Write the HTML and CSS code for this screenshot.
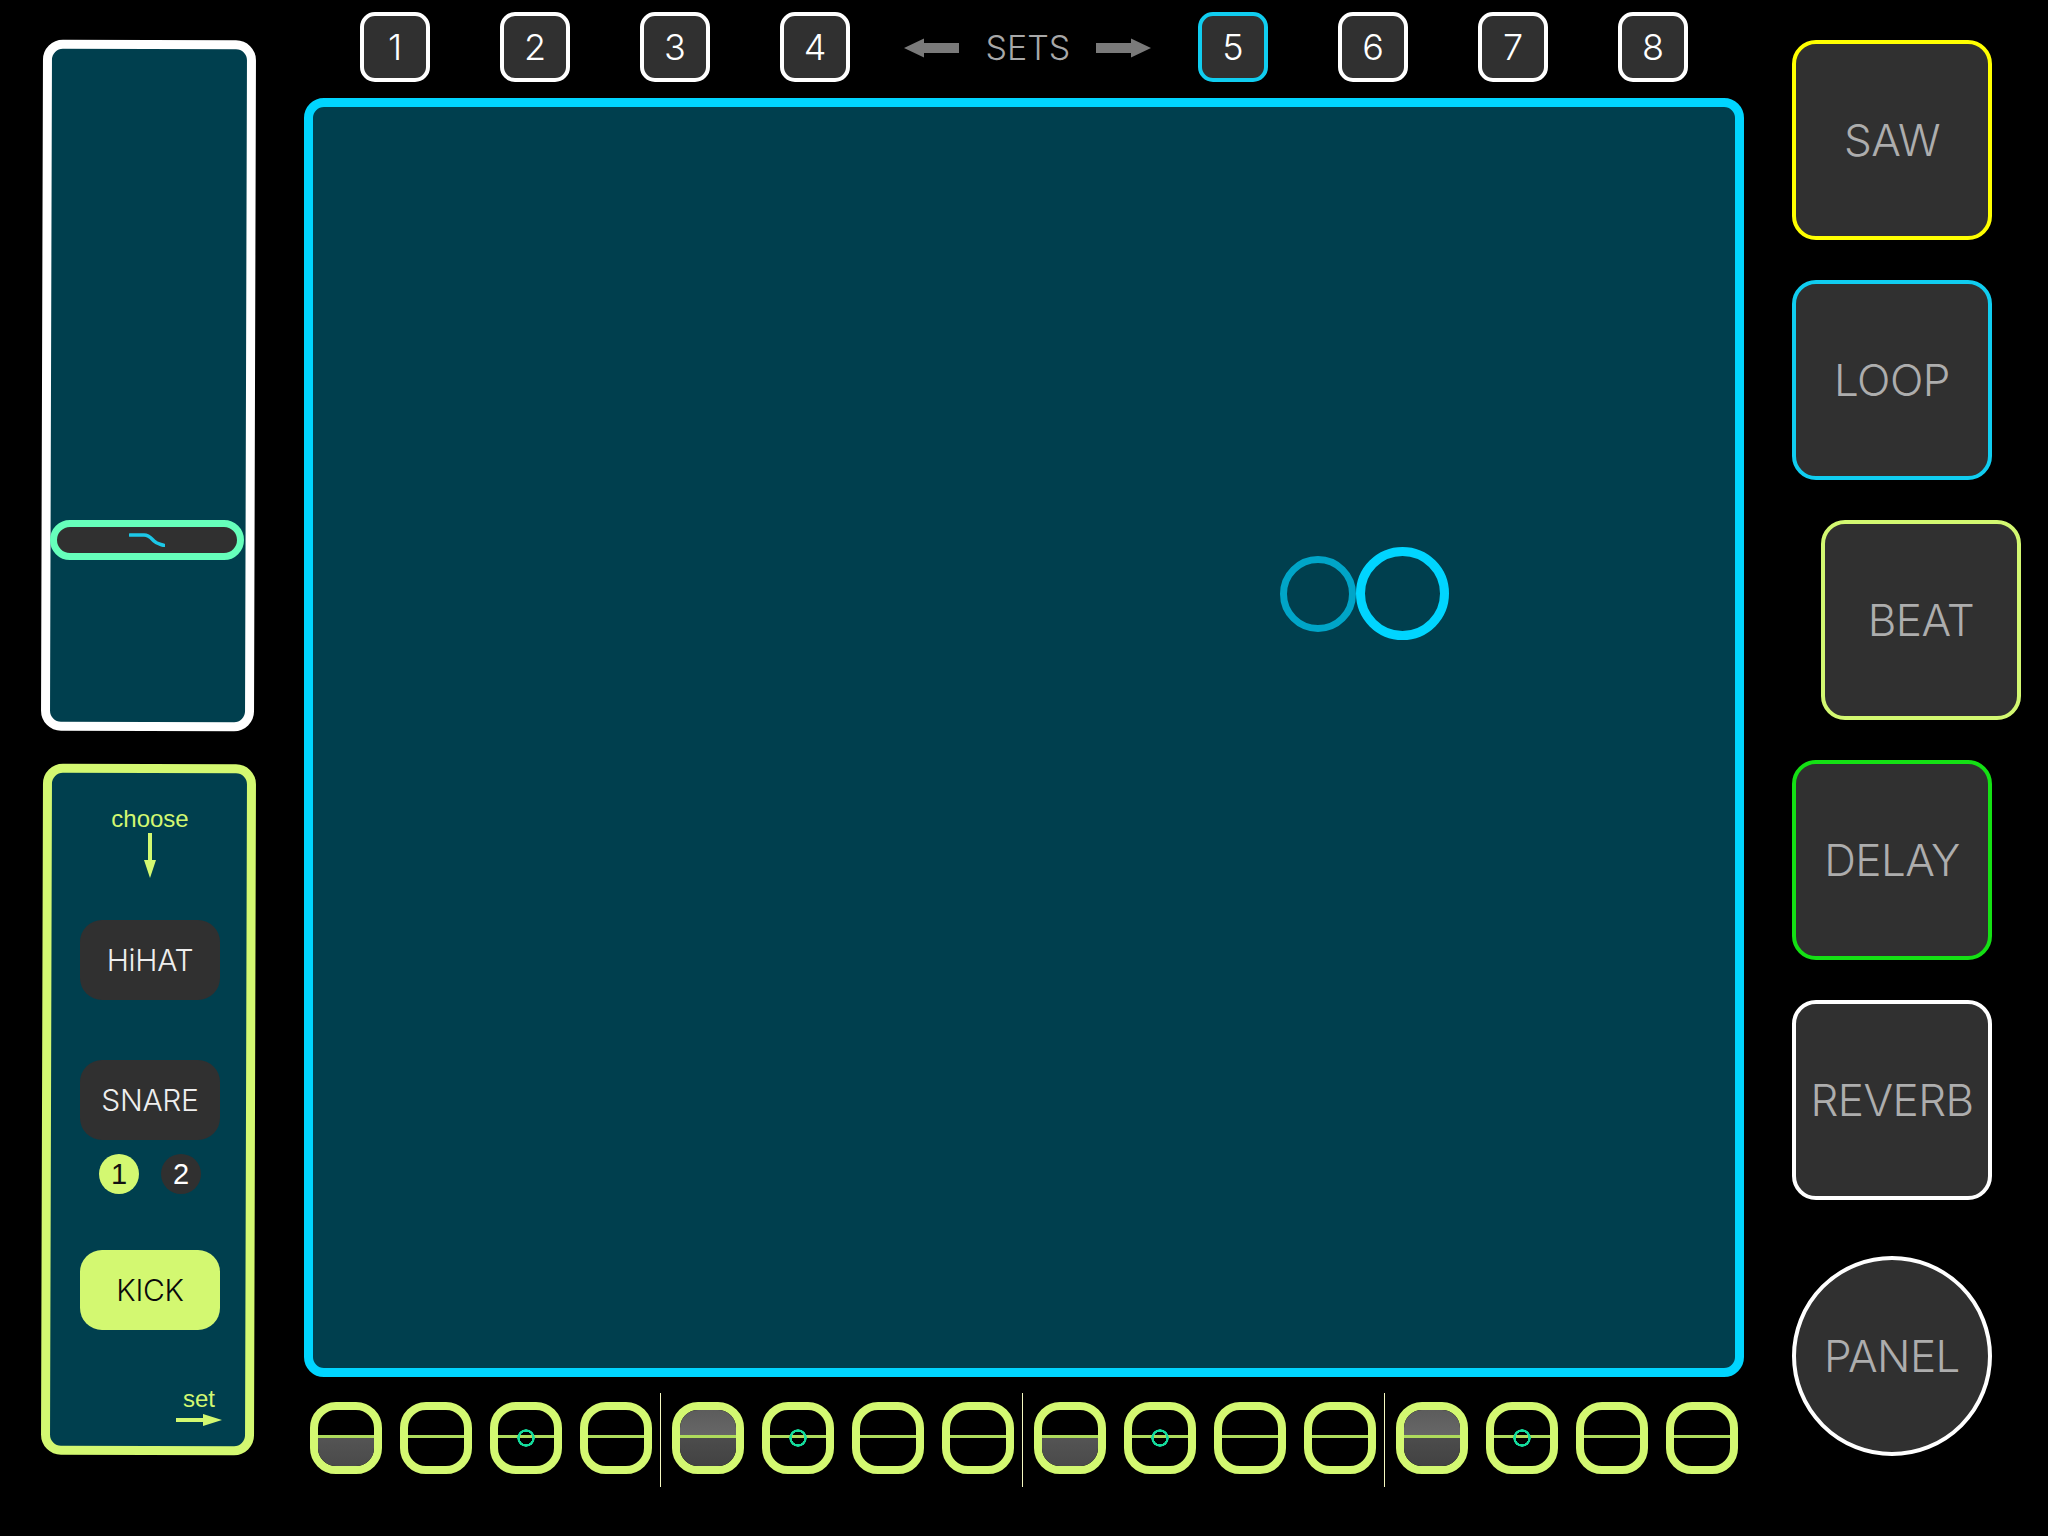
FILE: index.html
```html
<!DOCTYPE html>
<html lang="en">
<head>
<meta charset="utf-8">
<title>Sets</title>
<link rel="stylesheet" href="styles.css">
</head>
<body>
<div class="app">
  <aside class="left">
    <div class="panel panel-fader">
      <div class="handle">
        <svg class="handle-icon" width="36" height="14" viewBox="0 0 36 14"><path d="M1 2 H15 C20 2 22 5 25 8 C28 11 31 11 35 12.5" fill="none" stroke="#1cc8e8" stroke-width="3.5" stroke-linecap="round"/></svg>
      </div>
    </div>
    <div class="panel panel-choose">
      <span class="hint">choose</span>
      <svg class="arrow-down" width="14" height="45" viewBox="0 0 14 45"><polygon points="5,0 9,0 9,27 13,27 7,45 1,27 5,27" fill="#d3f871"/></svg>
      <button class="drum">HiHAT</button>
      <button class="drum snare">SNARE</button>
      <div class="variants">
        <span class="variant on">1</span>
        <span class="variant">2</span>
      </div>
      <button class="drum kick">KICK</button>
      <div class="set-foot">
        <span class="hint">set</span>
        <svg width="46" height="12" viewBox="0 0 46 12"><polygon points="0,4 27,4 27,0 46,6 27,12 27,8 0,8" fill="#d3f871"/></svg>
      </div>
    </div>
  </aside>

  <main class="center">
    <nav class="sets-row">
      <div class="num-group">
        <button class="num">1</button>
        <button class="num">2</button>
        <button class="num">3</button>
        <button class="num">4</button>
      </div>
      <div class="sets">
        <svg width="55" height="20" viewBox="0 0 55 20"><polygon points="0,10 20,0.5 20,5 55,5 55,15 20,15 20,19.5" fill="#7a7a7a"/></svg>
        <span class="sets-label">SETS</span>
        <svg width="55" height="20" viewBox="0 0 55 20"><polygon points="55,10 35,0.5 35,5 0,5 0,15 35,15 35,19.5" fill="#7a7a7a"/></svg>
      </div>
      <div class="num-group">
        <button class="num active">5</button>
        <button class="num">6</button>
        <button class="num">7</button>
        <button class="num">8</button>
      </div>
    </nav>

    <section class="stage">
      <span class="orb orb-small"></span>
      <span class="orb orb-big"></span>
    </section>

    <div class="steps">
      <div class="group">
        <div class="pad low"><i class="half"></i><i class="half"></i></div>
        <div class="pad"><i class="half"></i><i class="half"></i></div>
        <div class="pad mark"><i class="half"></i><i class="half"></i></div>
        <div class="pad"><i class="half"></i><i class="half"></i></div>
      </div>
      <span class="sep"></span>
      <div class="group">
        <div class="pad full"><i class="half"></i><i class="half"></i></div>
        <div class="pad mark"><i class="half"></i><i class="half"></i></div>
        <div class="pad"><i class="half"></i><i class="half"></i></div>
        <div class="pad"><i class="half"></i><i class="half"></i></div>
      </div>
      <span class="sep"></span>
      <div class="group">
        <div class="pad low"><i class="half"></i><i class="half"></i></div>
        <div class="pad mark"><i class="half"></i><i class="half"></i></div>
        <div class="pad"><i class="half"></i><i class="half"></i></div>
        <div class="pad"><i class="half"></i><i class="half"></i></div>
      </div>
      <span class="sep"></span>
      <div class="group">
        <div class="pad full"><i class="half"></i><i class="half"></i></div>
        <div class="pad mark"><i class="half"></i><i class="half"></i></div>
        <div class="pad"><i class="half"></i><i class="half"></i></div>
        <div class="pad"><i class="half"></i><i class="half"></i></div>
      </div>
    </div>
  </main>

  <aside class="right">
    <button class="fx saw">SAW</button>
    <button class="fx loop">LOOP</button>
    <button class="fx beat">BEAT</button>
    <button class="fx delay">DELAY</button>
    <button class="fx reverb">REVERB</button>
    <button class="fx panel-btn">PANEL</button>
  </aside>
</div>
</body>
</html>
```
FILE: styles.css
```css
* { box-sizing: border-box; }
html, body { margin: 0; height: 100%; background: #000; }
body { font-family: Inter, "Liberation Sans", sans-serif; font-weight: 300; overflow: hidden; }
button { font: inherit; padding: 0; display: flex; align-items: center; justify-content: center; }

.app { display: flex; width: 2048px; height: 1536px; padding-left: 42px; }

/* left column */
.left { width: 213px; padding-top: 40px; display: flex; flex-direction: column; gap: 33px; }
.panel { position: relative; isolation: isolate; width: 213px; }
.panel::before {
  content: ""; position: absolute; inset: 0; z-index: -1;
  background: #003f4e; border: 9px solid #fff; border-radius: 20px;
  transform: rotate(0.17deg);
}
.panel-fader { height: 691px; }
.handle {
  position: absolute; left: 8px; top: 480px; width: 194px; height: 40px;
  background: #303030; border: 7px solid #66ffbb; border-radius: 20px;
  display: flex; align-items: center; justify-content: center;
}
.panel-choose {
  height: 691px; padding: 41px 0 0 3px;
  display: flex; flex-direction: column; align-items: center;
}
.panel-choose::before { border-color: #d3f871; }
.hint { color: #d3f871; font-family: "Liberation Sans", sans-serif; font-size: 24px; line-height: 28px; font-weight: 400; }
.arrow-down { display: block; margin-top: 0; }
.drum {
  width: 140px; height: 80px; border: 0; border-radius: 22px;
  background: #303030; color: #eee; font-size: 30px; letter-spacing: -0.01em; margin-top: 42px;
}
.snare { margin-top: 60px; }
.kick { background: #d3f871; color: #0a0a0a; margin-top: 56px; }
.variants { display: flex; gap: 22px; margin-top: 14px; }
.variant {
  width: 40px; height: 40px; border-radius: 50%; background: #303030; color: #fff;
  font-family: "Liberation Sans", sans-serif; font-size: 29px; font-weight: 400;
  display: flex; align-items: center; justify-content: center;
}
.variant.on { background: #d3f871; color: #111; }
.set-foot { align-self: flex-end; margin: 55px 33px 0 0; width: 46px; display: flex; flex-direction: column; align-items: center; }
.set-foot svg { display: block; margin-top: 1px; }

/* centre column */
.center { width: 1440px; margin-left: 49px; display: flex; flex-direction: column; }
.sets-row { height: 98px; padding: 12px 0 0 56px; display: flex; align-items: flex-start; }
.num-group { display: flex; gap: 70px; width: 490px; }
.num {
  width: 70px; height: 70px; background: #303030; color: #fff;
  border: 4px solid #fff; border-radius: 15px; font-size: 36px;
}
.num.active { border-color: #10cdf0; }
.sets {
  width: 348px; height: 70px; padding-left: 6px; display: flex; align-items: center;
  justify-content: center; gap: 27px; color: #a8a8a8;
}
.sets svg { display: block; margin-top: 2px; }
.sets-label { font-size: 34px; width: 83px; text-align: center; white-space: nowrap; letter-spacing: 0; }

.stage {
  position: relative; width: 1440px; height: 1279px; background: #003f4e;
  border: 9px solid #00d5ff; border-radius: 20px;
}
.orb { position: absolute; border-radius: 50%; border-style: solid; }
.orb-small { left: 967px; top: 449px; width: 76px; height: 76px; border-width: 7px; border-color: #00a5c8; }
.orb-big { left: 1043px; top: 440px; width: 93px; height: 93px; border-width: 9px; border-color: #00d5ff; }

.steps { display: flex; padding: 25px 0 0 6px; align-items: flex-start; }
.group { display: flex; gap: 18px; }
.sep { width: 1px; height: 94px; margin: -9px 11px 0 8px; background: #f5f8c0; }
.pad {
  position: relative; width: 72px; height: 72px; background: #000;
  border: 8px solid #d3f871; border-radius: 26px; overflow: hidden;
  display: flex; flex-direction: column;
}
.half { flex: 1; display: block; }
.half + .half { border-top: 3px solid #aedb5c; margin-top: -3px; }
.low .half + .half { background: linear-gradient(#545454, #4a4a4a); }
.full .half { background: linear-gradient(#5c5c5c, #686868); }
.full .half + .half { background: linear-gradient(#4c4c4c, #424242); }
.mark::after {
  content: ""; position: absolute; left: 50%; top: 50%; width: 18px; height: 18px;
  margin: -9px 0 0 -9px; border-radius: 50%;
  background: radial-gradient(circle closest-side, transparent 6.1px, #14dc9c 6.5px, #14dc9c 8.5px, transparent 9px);
}

/* right column */
.right { margin-left: 48px; padding-top: 40px; display: flex; flex-direction: column; gap: 40px; }
.fx {
  width: 200px; height: 200px; background: #303030; color: #adadad;
  border: 4px solid #fff; border-radius: 24px; font-size: 44px; letter-spacing: -0.012em;
}
.saw { border-color: #ffff00; }
.loop { border-color: #10cdf0; }
.beat { border-color: #d3f871; margin-left: 29px; }
.delay { border-color: #14e014; }
.panel-btn { border-radius: 50%; margin-top: 16px; }
```
